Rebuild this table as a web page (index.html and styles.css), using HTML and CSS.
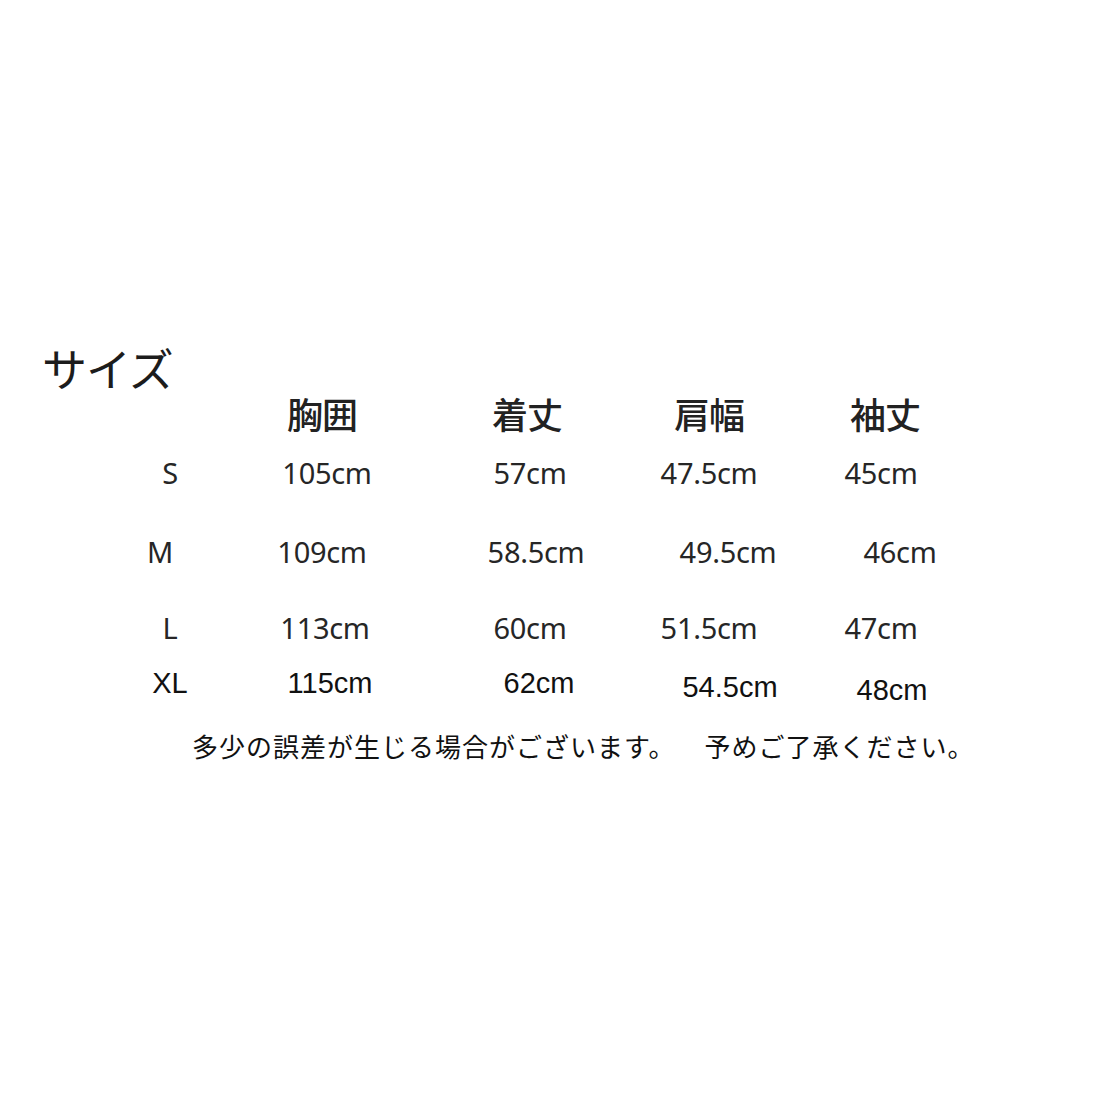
FILE: index.html
```html
<!DOCTYPE html>
<html lang="ja">
<head>
<meta charset="utf-8">
<title>サイズ</title>
<link rel="stylesheet" href="styles.css">
</head>
<body>
<div class="page">
  <h1 class="title">サイズ</h1>
  <div class="chart">
    <div class="cell"></div>
    <div class="cell head l3">胸囲</div>
    <div class="cell head l3">着丈</div>
    <div class="cell head">肩幅</div>
    <div class="cell head r2">袖丈</div>

    <div class="cell size">S</div>
    <div class="cell val r2">105cm</div>
    <div class="cell val">57cm</div>
    <div class="cell val">47.5cm</div>
    <div class="cell val l2">45cm</div>

    <div class="cell size l10">M</div>
    <div class="cell val l3">109cm</div>
    <div class="cell val r6">58.5cm</div>
    <div class="cell val r19">49.5cm</div>
    <div class="cell val r17">46cm</div>

    <div class="cell size">L</div>
    <div class="cell val">113cm</div>
    <div class="cell val">60cm</div>
    <div class="cell val">51.5cm</div>
    <div class="cell val l2">47cm</div>

    <div class="cell size xl">XL</div>
    <div class="cell val xl r5">115cm</div>
    <div class="cell val xl r9">62cm</div>
    <div class="cell val xl r21 d2">54.5cm</div>
    <div class="cell val xl r9 d5">48cm</div>
  </div>
  <p class="note">多少の誤差が生じる場合がございます。　<span class="note-b">予めご了承ください。</span></p>
</div>
</body>
</html>
```

FILE: styles.css
```css
html, body {
  margin: 0;
  padding: 0;
  background: #ffffff;
}

.page {
  width: 1100px;
  height: 1100px;
  padding-top: 345px;
  box-sizing: border-box;
  color: #1c1c1c;
  font-family: "Noto Sans CJK JP", "Noto Sans", sans-serif;
}

.title {
  margin: 0 0 0 42px;
  font-size: 45px;
  font-weight: 400;
  line-height: 46px;
  height: 46px;
  letter-spacing: -1px;
}

.chart {
  display: grid;
  margin-left: 92px;
  grid-template-columns: 156px 154px 256px 102px 246px;
  grid-template-rows: 44px 74px 84px 68px 44px;
  align-items: center;
}

.cell {
  justify-self: center;
  text-align: center;
  line-height: 1;
  white-space: nowrap;
}

.head {
  font-size: 36px;
  font-weight: 500;
  letter-spacing: -1px;
  color: #222;
}

.size,
.val {
  font-family: "Noto Sans", "Open Sans", sans-serif;
  font-size: 29px;
  color: #262626;
  letter-spacing: -0.3px;
}

.xl {
  font-family: "Liberation Sans", Arial, sans-serif;
  font-size: 29px;
  color: #111;
  letter-spacing: 0;
}

/* small horizontal nudges of the hand-placed labels */
.l2 { padding-right: 4px; }
.l3 { padding-right: 6px; }
.l10 { padding-right: 20px; }
.r2 { padding-left: 4px; }
.r5 { padding-left: 10px; }
.r6 { padding-left: 12px; }
.r9 { padding-left: 18px; }
.r17 { padding-left: 34px; }
.r19 { padding-left: 38px; }
.r21 { padding-left: 42px; }

/* slight downward drift in the last row */
.d2 { margin-top: 8px; }
.d5 { margin-top: 14px; }

.note {
  margin: 26px 0 0 192px;
  font-size: 26px;
  line-height: 30px;
  letter-spacing: 1px;
  color: #111;
  white-space: nowrap;
}

.note-b {
  margin-left: 15px;
}
```
